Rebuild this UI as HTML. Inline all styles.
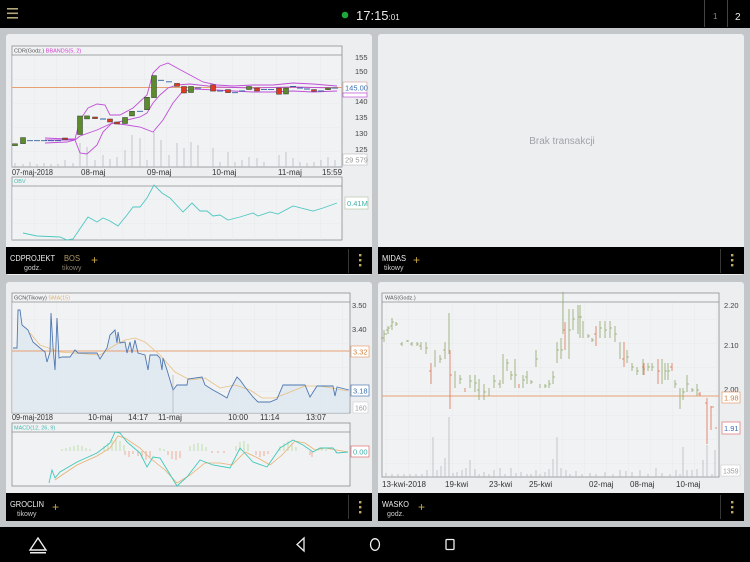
<!DOCTYPE html>
<html><head><meta charset="utf-8"><style>
html,body{margin:0;padding:0;background:#000;}
svg{display:block;font-family:"Liberation Sans",sans-serif;}
</style></head><body>
<svg width="750" height="562" viewBox="0 0 750 562" xmlns="http://www.w3.org/2000/svg">
<defs>
<pattern id="g1" x="12" y="55" width="22" height="24" patternUnits="userSpaceOnUse"><path d="M0 0V24M0 0H22" stroke="#dfe2e5" stroke-width="0.6" fill="none"/></pattern>
</defs>
<rect x="0" y="0" width="750" height="28" fill="#000"/>
<rect x="7" y="8" width="11" height="1.6" fill="#b5a77a"/><rect x="7" y="12.5" width="11" height="1.6" fill="#b5a77a"/><rect x="7" y="17" width="11" height="1.6" fill="#b5a77a"/>
<circle cx="345" cy="15" r="3.3" fill="#1fa83a"/>
<text x="356" y="20" fill="#e8e8e8" font-size="13">17:15<tspan font-size="8">:01</tspan></text>
<rect x="704" y="0" width="0.8" height="27" fill="#555"/><rect x="727" y="0" width="0.8" height="27" fill="#555"/>
<text x="713" y="19" fill="#888" font-size="8">1</text>
<text x="735" y="20" fill="#eee" font-size="10">2</text>
<rect x="0" y="28" width="750" height="499" fill="#c4c7ca"/>
<rect x="0" y="527" width="750" height="35" fill="#000"/>
<path d="M38 538 L46 550 L30 550 Z" fill="none" stroke="#eee" stroke-width="1.4"/><rect x="30" y="552" width="16" height="1.5" fill="#eee"/>
<path d="M304 538 L297 544.5 L304 551 Z" fill="none" stroke="#eee" stroke-width="1.3"/>
<ellipse cx="375" cy="544.5" rx="4.5" ry="5.8" fill="none" stroke="#eee" stroke-width="1.3"/>
<rect x="446" y="539.5" width="8" height="10" rx="1" fill="none" stroke="#eee" stroke-width="1.3"/>

<rect x="6" y="34" width="366" height="241" rx="3" fill="#eceef0"/>
<rect x="378" y="34" width="366" height="241" rx="3" fill="#eceef0"/>
<rect x="6" y="282" width="366" height="239" rx="3" fill="#eceef0"/>
<rect x="378" y="282" width="366" height="239" rx="3" fill="#eceef0"/>
<rect x="6" y="247" width="366" height="27" fill="#000"/>
<rect x="378" y="247" width="366" height="27" fill="#000"/>
<rect x="6" y="493" width="366" height="28" fill="#000"/>
<rect x="378" y="493" width="366" height="28" fill="#000"/>
<g fill="#444"><rect x="348" y="249" width="0.8" height="24"/><rect x="720" y="249" width="0.8" height="24"/><rect x="348" y="495" width="0.8" height="24"/><rect x="720" y="495" width="0.8" height="24"/></g>
<g fill="#c0a860"><rect x="359" y="254" width="2.4" height="2.4"/><rect x="359" y="259" width="2.4" height="2.4"/><rect x="359" y="264" width="2.4" height="2.4"/>
<rect x="731" y="254" width="2.4" height="2.4"/><rect x="731" y="259" width="2.4" height="2.4"/><rect x="731" y="264" width="2.4" height="2.4"/>
<rect x="359" y="501" width="2.4" height="2.4"/><rect x="359" y="506" width="2.4" height="2.4"/><rect x="359" y="511" width="2.4" height="2.4"/>
<rect x="731" y="501" width="2.4" height="2.4"/><rect x="731" y="506" width="2.4" height="2.4"/><rect x="731" y="511" width="2.4" height="2.4"/></g>
<g font-size="8.5">
<text x="10" y="261" fill="#eee" textLength="45" lengthAdjust="spacingAndGlyphs">CDPROJEKT</text><text x="24" y="270" fill="#ccc" font-size="7">godz.</text>
<text x="64" y="261" fill="#b09a6a" textLength="16" lengthAdjust="spacingAndGlyphs">BOS</text><text x="62" y="270" fill="#8a8070" font-size="7">tikowy</text>
<text x="91" y="264" fill="#c9a84a" font-size="12">+</text>
<text x="382" y="261" fill="#eee" textLength="24" lengthAdjust="spacingAndGlyphs">MIDAS</text><text x="384" y="270" fill="#ccc" font-size="7">tikowy</text>
<text x="413" y="264" fill="#c9a84a" font-size="12">+</text>
<text x="10" y="507" fill="#eee" textLength="34" lengthAdjust="spacingAndGlyphs">GROCLIN</text><text x="17" y="516" fill="#ccc" font-size="7">tikowy</text>
<text x="52" y="511" fill="#c9a84a" font-size="12">+</text>
<text x="382" y="507" fill="#eee" textLength="27" lengthAdjust="spacingAndGlyphs">WASKO</text><text x="387" y="516" fill="#ccc" font-size="7">godz.</text>
<text x="418" y="511" fill="#c9a84a" font-size="12">+</text>
</g>
<text x="562" y="144" fill="#a0a3a6" font-size="10" text-anchor="middle">Brak transakcji</text>

<rect x="12" y="46" width="330" height="121" fill="#f1f2f4" stroke="#8a8d90" stroke-width="0.8"/>
<rect x="12" y="55" width="330" height="112" fill="url(#g1)"/>
<line x1="12" y1="55" x2="342" y2="55" stroke="#8a8d90" stroke-width="0.8"/>
<text x="14" y="52.5" font-size="5.5" fill="#555">CDR(Godz.) <tspan fill="#d040d0">BBANDS(5, 2)</tspan></text>
<g stroke="#b8b9bc" stroke-width="0.8">
<path d="M15 167V163M23 167V164M30 167V162M37 167V164M44 167V163M51 167V164M58 167V164M65 167V160M73 167V163M80 167V143M87 167V147M95 167V160M103 167V155M110 167V159M117 167V157M125 167V150M132 167V135M140 167V138M147 167V160M154 167V132M161 167V140M169 167V155M177 167V143M184 167V148M191 167V142M198 167V145M213 167V148M220 167V162M228 167V152M235 167V162M242 167V160M249 167V157M257 167V158M264 167V162M279 167V155M286 167V152M293 167V158M300 167V162M307 167V163M314 167V162M321 167V160M328 167V157M335 167V160"/>
</g>
<line x1="12" y1="87.5" x2="342" y2="87.5" stroke="#e8a070" stroke-width="1"/>
<polyline fill="none" stroke="#c050d8" stroke-width="0.9" points="45,138 67,139 75,139 80,120 88,108 97,104 105,105 110,115 120,115 133,108 147,95 153,73 160,66 168,63 177,68 190,75 203,82 217,85 233,86 253,85 273,85 293,83 313,84 337,86"/>
<polyline fill="none" stroke="#c050d8" stroke-width="0.9" points="45,143 67,142 75,140 80,153 87,154 97,145 103,132 112,123 127,125 140,127 153,132 163,120 173,103 182,92 193,89 217,90 233,91 253,92 273,92 293,91 313,92 337,91"/>
<polyline fill="none" stroke="#c050d8" stroke-width="0.9" points="45,140 75,140 80,136 97,130 110,124 127,120 140,117 147,113 153,103 160,95 168,88 177,85 190,84 217,87 253,88 293,87 337,88"/>
<g stroke="#2a3a2a" stroke-width="0.5">
<g fill="#5d8a2c">
<rect x="12.5" y="143.8" width="5" height="1.8"/><rect x="20.5" y="137.6" width="5" height="6"/>
<rect x="77.5" y="116" width="5" height="18.5"/><rect x="84.5" y="115.9" width="5" height="3"/>
<rect x="122.5" y="117.5" width="5" height="6"/><rect x="129.5" y="111.3" width="5" height="4.6"/>
<rect x="144.5" y="97.3" width="5" height="12.4"/><rect x="151.5" y="75.6" width="5" height="22"/>
<rect x="188.5" y="86.5" width="5" height="6"/><rect x="246.5" y="86.5" width="5" height="3"/>
<rect x="283.5" y="88" width="5" height="6"/><rect x="325.5" y="88" width="5" height="1.6"/>
</g>
<g fill="#e03a22">
<rect x="62.5" y="138" width="5" height="1.5"/><rect x="92.5" y="117" width="5" height="1.6"/>
<rect x="107.5" y="119" width="5" height="3"/><rect x="114.5" y="122" width="5" height="2"/>
<rect x="174.5" y="83.4" width="5" height="3"/><rect x="181.5" y="86.5" width="5" height="6.5"/>
<rect x="210.5" y="84.9" width="5" height="6.2"/><rect x="225.5" y="89.6" width="5" height="3"/>
<rect x="254.5" y="88" width="5" height="3"/><rect x="276.5" y="88" width="5" height="6.2"/>
<rect x="311.5" y="89.6" width="5" height="1.6"/>
</g>
</g>
<g stroke="#3060a0" stroke-width="0.9">
<path d="M27 140.7H33M34 140.7H40M41 140.7H47M48 140.7H54M55 140.7H61M100 119H106M137 111.3H143M158 80.3H164M166 81.8H172M195 88H201M217 91H223M232 92.7H238M239 91H245M261 89.6H267M268 89.6H274M290 86.5H296M297 88H303M304 89H310M318 91H324M332 88H338"/>
</g>
<g font-size="7.5" fill="#444">
<text x="355" y="60">155</text><text x="355" y="74">150</text><text x="355" y="104">140</text><text x="355" y="120">135</text><text x="355" y="136">130</text><text x="355" y="152">125</text>
</g>
<rect x="343" y="82" width="24" height="11" fill="#fff" stroke="#d8a8a8" stroke-width="0.7"/>
<text x="345" y="90.5" font-size="7.5" fill="#3a70b0">145.00</text>
<rect x="343" y="93" width="24" height="4" fill="#fff" stroke="#c050d8" stroke-width="0.7"/>
<rect x="343" y="154" width="24" height="11" fill="#fff" stroke="#bbb" stroke-width="0.6"/>
<text x="345" y="162.5" font-size="7.5" fill="#999">29 579</text>
<g font-size="8" fill="#333">
<text x="12" y="175" textLength="41" lengthAdjust="spacingAndGlyphs">07-maj-2018</text><text x="81" y="175">08-maj</text><text x="147" y="175">09-maj</text><text x="212" y="175">10-maj</text><text x="278" y="175">11-maj</text><text x="322" y="175">15:59</text>
</g>
<rect x="12" y="177" width="330" height="63" fill="#f1f2f4" stroke="#8a8d90" stroke-width="0.8"/>
<rect x="12" y="186" width="330" height="54" fill="url(#g1)"/>
<line x1="12" y1="186" x2="342" y2="186" stroke="#8a8d90" stroke-width="0.8"/>
<text x="14" y="183" font-size="5.5" fill="#40b8b0">OBV</text>
<polyline fill="none" stroke="#50c8c0" stroke-width="0.9" points="23,233 37,236 60,237 67,240 73,239 88,217 97,222 103,218 110,221 118,226 127,215 133,207 140,207 147,198 154,185 162,193 170,198 183,212 192,203 200,211 207,211 213,216 220,215 228,220 240,217 253,213 258,216 270,212 278,214 293,206 313,211 323,208 337,203"/>
<rect x="345" y="197" width="23" height="12" fill="#fff" stroke="#b8c8a8" stroke-width="0.7"/>
<text x="347" y="206" font-size="7.5" fill="#40b0a8">0.41M</text>

<rect x="12" y="293" width="338" height="120" fill="#f1f2f4" stroke="#8a8d90" stroke-width="0.8"/>
<rect x="12" y="302" width="338" height="111" fill="url(#g1)"/>
<line x1="12" y1="302" x2="350" y2="302" stroke="#8a8d90" stroke-width="0.8"/>
<text x="14" y="299.5" font-size="5.5" fill="#555">GCN(Tikowy) <tspan fill="#e0b070">SMA(15)</tspan></text>
<polygon fill="#dde6f0" opacity="0.8" points="13,413 13,348 17,348 18,310 20,310 22,325 28,330 33,342 40,348 45,352 47,362 50,352 51,313 53,347 55,370 57,318 59,358 62,357 70,357 75,350 78,353 97,353 100,359 107,348 110,335 115,330 117,343 118,332 120,343 125,342 127,353 130,342 132,353 135,340 138,353 145,355 148,370 150,355 157,355 160,358 162,370 163,358 167,370 173,390 177,385 187,385 188,379 202,377 205,385 213,390 222,395 227,398 230,390 237,377 240,380 245,387 253,397 258,402 270,402 277,399 283,385 305,385 310,397 317,386 333,386 335,396 337,387 349,390 349,413"/>
<line x1="12" y1="351" x2="350" y2="351" stroke="#e8a070" stroke-width="1"/>
<polyline fill="none" stroke="#e8c080" stroke-width="0.8" points="30,333 40,345 60,352 100,355 115,345 125,340 135,338 145,342 160,355 175,372 190,380 205,378 220,388 235,385 250,390 262,398 275,398 290,392 305,386 320,386 348,391"/>
<polyline fill="none" stroke="#5078b0" stroke-width="0.9" points="13,348 17,348 18,310 20,310 22,325 28,330 33,342 40,348 45,352 47,362 50,352 51,313 53,347 55,370 57,318 59,358 62,357 70,357 75,350 78,353 97,353 100,359 107,348 110,335 115,330 117,343 118,332 120,343 125,342 127,353 130,342 132,353 135,340 138,353 145,355 148,370 150,355 157,355 160,358 162,370 163,358 167,370 173,390 177,385 187,385 188,379 202,377 205,385 213,390 222,395 227,398 230,390 237,377 240,380 245,387 253,397 258,402 270,402 277,399 283,385 305,385 310,397 317,386 333,386 335,396 337,387 349,390"/>
<line x1="173" y1="375" x2="173" y2="413" stroke="#aaa" stroke-width="0.6"/>
<g font-size="7.5" fill="#444"><text x="352" y="308">3.50</text><text x="352" y="332">3.40</text></g>
<rect x="351" y="346" width="18" height="11" fill="#fff" stroke="#e8a070" stroke-width="0.7"/>
<text x="353" y="354.5" font-size="7.5" fill="#d08040">3.32</text>
<rect x="351" y="385" width="18" height="11" fill="#fff" stroke="#5078b0" stroke-width="0.7"/>
<text x="353" y="393.5" font-size="7.5" fill="#3a70b0">3.18</text>
<rect x="353" y="402" width="15" height="11" fill="#fff" stroke="#ccc" stroke-width="0.6"/>
<text x="355" y="410.5" font-size="7" fill="#999">160</text>
<g font-size="8" fill="#333">
<text x="12" y="420" textLength="41" lengthAdjust="spacingAndGlyphs">09-maj-2018</text><text x="88" y="420">10-maj</text><text x="128" y="420">14:17</text><text x="158" y="420">11-maj</text><text x="228" y="420">10:00</text><text x="260" y="420">11:14</text><text x="306" y="420">13:07</text>
</g>
<rect x="12" y="423" width="338" height="63" fill="#f1f2f4" stroke="#8a8d90" stroke-width="0.8"/>
<line x1="12" y1="432" x2="350" y2="432" stroke="#8a8d90" stroke-width="0.8"/>
<text x="14" y="429.5" font-size="5.5" fill="#40b8b0">MACD(12, 26, 9)</text>
<g stroke="#a8d890" stroke-width="0.7">
<path d="M62 451V449M66 451V448M70 451V447M74 451V446M78 451V445M82 451V446M86 451V448M90 451V449M104 451V446M108 451V443M112 451V440M116 451V439M120 451V441M124 451V445M160 451V448M164 451V449M190 451V446M194 451V444M198 451V443M202 451V444M206 451V447M236 451V446M240 451V442M244 451V441M248 451V444M280 451V446M284 451V443M288 451V441M292 451V443M296 451V447M318 451V449M322 451V448M326 451V449"/>
</g>
<g stroke="#f09070" stroke-width="0.7">
<path d="M125 451V455M129 451V457M133 451V454M138 451V456M142 451V458M146 451V460M150 451V457M168 451V455M172 451V459M176 451V460M180 451V458M212 451V453M218 451V453M224 451V453M256 451V455M260 451V457M264 451V456M268 451V454M310 451V455M312 451V457M336 451V453"/>
</g>
<polyline fill="none" stroke="#e8b070" stroke-width="0.8" points="55,480 62,475 77,465 97,456 110,448 118,436 125,438 140,448 150,458 165,470 177,483 190,475 205,463 220,463 232,465 245,452 258,458 270,465 282,455 295,441 305,443 315,450 325,448 348,452"/>
<polyline fill="none" stroke="#40c8b8" stroke-width="0.9" points="49,483 52,470 55,478 60,472 77,462 97,453 110,443 115,432 120,433 127,442 140,453 147,467 153,457 160,458 177,486 187,477 200,460 213,465 230,468 240,448 253,462 267,467 280,448 293,440 303,445 313,452 320,448 333,448 337,453 348,452"/>
<rect x="351" y="446" width="18" height="11" fill="#fff" stroke="#e07070" stroke-width="0.7"/>
<text x="353" y="454.5" font-size="7.5" fill="#40b0a8">0.00</text>

<rect x="382" y="293" width="337" height="184" fill="#f1f2f4" stroke="#8a8d90" stroke-width="0.8"/>
<rect x="382" y="302" width="337" height="175" fill="url(#g1)"/>
<line x1="382" y1="302" x2="719" y2="302" stroke="#8a8d90" stroke-width="0.8"/>
<text x="385" y="299.5" font-size="5.5" fill="#555">WAS(Godz.)</text>
<g stroke="#b8b9bc" stroke-width="0.8">
<path d="M386 477V473M392 477V474M398 477V474M404 477V474M410 477V474M416 477V474M422 477V474M427 477V470M433 477V437M437 477V470M441 477V466M445 477V458M449 477V417M453 477V473M457 477V472M462 477V470M466 477V468M470 477V460M475 477V469M479 477V474M484 477V472M489 477V474M494 477V470M500 477V468M505 477V474M511 477V468M516 477V473M521 477V472M527 477V474M531 477V474M536 477V470M540 477V474M545 477V472M549 477V469M553 477V459M557 477V437M561 477V468M566 477V470M570 477V474M576 477V471M582 477V474M590 477V473M596 477V474M605 477V472M613 477V474M620 477V470M626 477V471M632 477V472M640 477V470M648 477V474M656 477V468M662 477V473M670 477V474M676 477V470M680 477V474M683 477V447M687 477V470M692 477V470M697 477V469M703 477V460M707 477V445M712 477V474M715 477V450"/>
</g>
<line x1="382" y1="396" x2="719" y2="396" stroke="#e8a070" stroke-width="1"/>
<g stroke="#90a868" stroke-width="0.8" fill="none">
<path d="M384 342V330M388 334V326M392 330V318M396 326V322M402 346V342M407 342V340M412 346V342M417 346V342M421 350V342M426 354V342M435 367V350M440 363V355M445 359V342M449 354V313M455 388V371M460 384V375M470 388V375M475 392V375M479 400V379M484 400V384M489 396V388M494 388V375M500 388V380M503 384V354M507 371V359M511 380V371M515 388V359M523 388V375M527 384V371M531 384V380M536 367V350M540 388V384M545 388V384M549 388V380M553 384V371M557 363V342M561 359V338M563 334V292M569 359V309M573 330V309M578 334V305M580 338V305M583 338V321M588 338V334M592 342V338M600 338V321M605 338V321M610 338V321M615 342V326M620 359V342M627 363V350M632 371V363M637 375V367M643 375V359M648 371V363M652 371V363M662 384V359M665 380V363M668 380V363M675 388V380M680 409V388M683 400V388M687 392V375M692 392V388M697 396V384"/>
<path d="M384 338H381M384 334H387M388 330H386M388 328H390M392 326H390M392 322H394M396 324H398M402 344H400M407 341H409M412 344H410M417 344H419M421 346H419M426 348H428M440 359H442M445 350H443M460 379H462M470 381H472M475 383H477M479 390H477M484 392H486M494 381H496M500 384H498M507 363H509M511 375H513M515 375H517M523 380H525M527 377H525M531 382H533M536 359H538M545 386H547M549 384H551M553 377H555M557 350H559M561 350H563M569 330H571M573 319H575M578 317H580M580 317H582M588 336H590M592 340H594M600 328H602M605 330H607M610 328H612M615 334H617M627 357H629M632 367H634M637 371H639M643 369H645M648 367H650M652 367H654M665 371H667M668 371H670M675 384H677M683 392H685M687 384H689M692 390H694M697 390H699"/>
</g>
<g stroke="#e07050" stroke-width="0.8" fill="none">
<path d="M431 384V363M450 409V350M465 392V388M519 388V384M565 350V322M596 346V326M624 367V342M644 375V363M658 384V359M672 371V363M700 396V392M707 444V398M711 430V406M715 428H717"/>
<path d="M431 371H429M450 375H452M565 330H563M596 334H594M624 359H622M644 367H642M658 371H660M672 367H670M700 394H698M707 403H705M711 407H714"/>
</g>
<g font-size="7.5" fill="#444"><text x="724" y="308">2.20</text><text x="724" y="348">2.10</text><text x="724" y="392">2.00</text></g>
<rect x="722" y="392" width="18" height="11" fill="#fff" stroke="#e8a070" stroke-width="0.7"/>
<text x="724" y="400.5" font-size="7.5" fill="#d08040">1.98</text>
<rect x="722" y="422" width="18" height="12" fill="#fff" stroke="#e07070" stroke-width="0.7"/>
<text x="724" y="431" font-size="7.5" fill="#3a70b0">1.91</text>
<rect x="721" y="465" width="19" height="11" fill="#fff" stroke="#ccc" stroke-width="0.6"/>
<text x="723" y="473.5" font-size="7" fill="#999">1359</text>
<g font-size="8" fill="#333">
<text x="382" y="487" textLength="44" lengthAdjust="spacingAndGlyphs">13-kwi-2018</text><text x="445" y="487">19-kwi</text><text x="489" y="487">23-kwi</text><text x="529" y="487">25-kwi</text><text x="589" y="487">02-maj</text><text x="630" y="487">08-maj</text><text x="676" y="487">10-maj</text>
</g>
</svg>
</body></html>
